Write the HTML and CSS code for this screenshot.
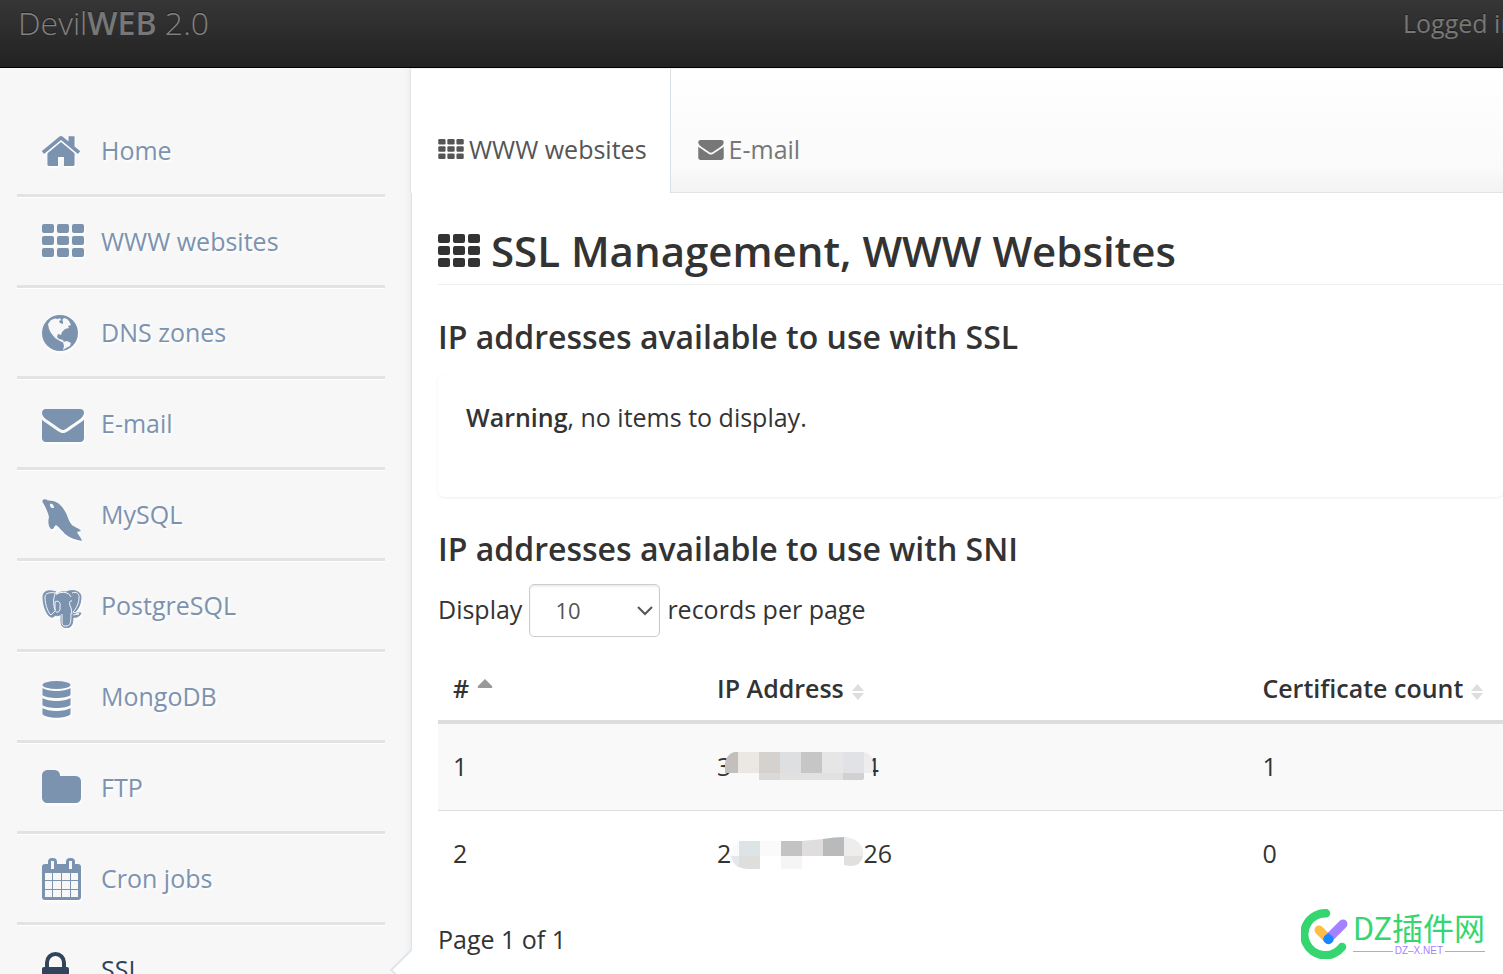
FILE: index.html
```html
<!DOCTYPE html>
<html lang="en">
<head>
<meta charset="utf-8">
<title>DevilWEB 2.0 - SSL Management</title>
<link rel="stylesheet" href="styles.css">
</head>
<body>
<svg class="sprite" aria-hidden="true">
  <symbol id="th" viewBox="0 0 42 33"><g><rect width="12" height="9" rx="2"/><rect x="15" width="12" height="9" rx="2"/><rect x="30" width="12" height="9" rx="2"/><rect y="12" width="12" height="9" rx="2"/><rect x="15" y="12" width="12" height="9" rx="2"/><rect x="30" y="12" width="12" height="9" rx="2"/><rect y="24" width="12" height="9" rx="2"/><rect x="15" y="24" width="12" height="9" rx="2"/><rect x="30" y="24" width="12" height="9" rx="2"/></g></symbol>
  <symbol id="envelope" viewBox="0 256 1792 1408"><path d="M1792 710v794q0 66-47 113t-113 47h-1472q-66 0-113-47t-47-113v-794q44 49 101 87 362 246 497 345 57 42 92.500 65.500t94.500 48 110 24.500h2q51 0 110-24.500t94.500-48 92.500-65.500q170-123 498-345 57-39 100-87zm0-294q0 79-49 151t-122 123q-376 261-468 325-10 7-42.500 31t-54 38.500-52 32.500-57.500 27-50 9h-2q-23 0-50-9t-57.500-27-52-32.500-54-38.500-42.500-31q-91-64-262-182.500t-205-142.500q-62-42-117-115.500t-55-136.500q0-78 41.500-130t118.500-52h1472q65 0 112.500 47t47.500 113z"/></symbol>
</svg>

<header class="topbar">
  <a class="brand" href="#">Devil<strong>WEB</strong> 2.0</a>
  <p class="login">Logged in</p>
</header>

<div class="layout">
  <nav class="sidebar">
    <ul class="menu">
      <li><a href="#"><svg class="icon" viewBox="0 0 44 56"><svg y="14" width="38" height="30" viewBox="89 250 1614 1286" preserveAspectRatio="none"><path d="M1472 992v480q0 26-19 45t-45 19h-384v-384h-256v384h-384q-26 0-45-19t-19-45v-480q0-1 .5-3t.5-3l575-474 575 474q1 2 1 6zm223-69l-62 74q-8 9-21 11h-3q-13 0-21-7l-692-577-692 577q-12 8-24 7-13-2-21-11l-62-74q-8-10-7-23.500t11-21.500l719-599q32-26 76-26t76 26l244 204v-195q0-14 9-23t23-9h192q14 0 23 9t9 23v408l219 182q10 8 11 21.500t-7 23.500z"/></svg></svg><span>Home</span></a></li>
      <li><a href="#"><svg class="icon" viewBox="0 0 44 56"><use href="#th" y="11" width="42" height="33"/></svg><span>WWW websites</span></a></li>
      <li><a href="#"><svg class="icon" viewBox="0 0 44 56"><circle cx="18" cy="29" r="18"/><path class="cut" d="M6 20 L9 16 L13 14.500 L16 15 L18 14 L19 16 L17 17 L18 19 L21 20 L21 17 L20 16 L22 14 L25 15 L27 17 L29 21 L26 22 L27 24 L23 25 L20 28 L19 31 L16 30 L15 33 L17 35 L21 36 L22 39 L18 37 L13 34 L9 29 L7 25 Z"/><path class="cut" d="M21 38 L25 37 L29 39 L28 42 L24 44 L21 46 L22 42 Z"/></svg><span>DNS zones</span></a></li>
      <li><a href="#"><svg class="icon" viewBox="0 0 44 56"><use href="#envelope" y="14" width="42" height="33"/></svg><span>E-mail</span></a></li>
      <li><a href="#"><svg class="icon" viewBox="0 0 44 56"><path d="M.5 16 C0 13 3 12.500 6 14.500 C14 14 20 19 24 27 C26 31 27 36 30 39 C32 41 37 42 39 45 L35 46 C36 49 39 51 40 55 C34 54 28 52 23 48 C20 45 17 41 14 39 C12 40 12 44 9 43 C6 40 6 35 7 31 C6 26 4 22 .5 16 Z"/><path class="cut" d="M8 18 C10 17 12 19 12 22 L10 22 C8 21 8 20 8 18 Z"/></svg><span>MySQL</span></a></li>
      <li><a href="#"><svg class="icon" viewBox="0 0 44 56"><g class="pg"><path d="M14 15 C8 13 1 13 1 20 C1 29 5 39 9 40 C12 41 14 37 15 36"/><path d="M24 15 C31 12 39 14 39 20 C39 28 35 34 32 36 L39 36 C38 40 33 41 30 40"/><path d="M19 37 C17 39 13 40 12 36 L14 23 C13 17 18 14 23 15 C29 15 32 20 31 25 C33 31 31 35 31 40 C31 46 30 50 26 50.500 C21 51 19 49 19 44 Z"/></g><g class="pg-line"><path d="M3 20 C3 29 7 37 9 38 L13 34 M14 15 C10 22 12 30 13 33"/><path d="M3 20 C3 16 8 15 13 16 M15 17 C20 14 27 15 29 20 M30 16 C34 14 38 17 37 21 C37 26 34 32 31 35 L37 37 L31 38"/><path d="M13 25 C16 23 19 25 18 30 C19 36 13 37 13 32 Z M30 24 C27 23 27 27 29 31 L30 37"/><path d="M20 37 V45 C20 49 22 49 25 49 C29 48 29 44 29 36"/></g></svg><span>PostgreSQL</span></a></li>
      <li><a href="#"><svg class="icon" viewBox="0 0 44 56"><ellipse cx="14.500" cy="17" rx="14" ry="4"/><path d="M.5 20 C6 24 23 24 28.500 20 V27 C25 31 4 31 .5 27 Z M.5 30 C6 34 23 34 28.500 30 V37 C25 41 4 41 .5 37 Z M.5 40 C6 44 23 44 28.500 40 V46 C25 51 4 51 .5 46 Z"/></svg><span>MongoDB</span></a></li>
      <li><a href="#"><svg class="icon" viewBox="0 0 44 56"><svg y="11" width="39" height="33" viewBox="64 128 1664 1408"><path d="M1728 608v704q0 92-66 158t-158 66h-1216q-92 0-158-66t-66-158v-960q0-92 66-158t158-66h320q92 0 158 66t66 158v32h672q92 0 158 66t66 158z"/></svg></svg><span>FTP</span></a></li>
      <li><a href="#"><svg class="icon" viewBox="0 0 44 56"><rect y="14" width="39" height="36" rx="3"/><rect x="6" y="8" width="9" height="12" rx="4"/><rect x="24" y="8" width="9" height="12" rx="4"/><path class="cut" d="M9 11h3v8h-3z M27 11h3v8h-3z M3 23h7v7h-7z M11 23h8v7h-8z M20 23h8v7h-8z M29 23h7v7h-7z M3 31h7v8h-7z M11 31h8v8h-8z M20 31h8v8h-8z M29 31h7v8h-7z M3 40h7v7h-7z M11 40h8v7h-8z M20 40h8v7h-8z M29 40h7v7h-7z"/></svg><span>Cron jobs</span></a></li>
      <li class="active"><a href="#"><svg class="icon" viewBox="0 0 44 56"><rect y="26" width="27" height="19" rx="2"/><path class="shackle" d="M5 28 V21.500 A8.500 8.500 0 0 1 22 21.500 V28"/></svg><span>SSL</span></a></li>
    </ul>
  </nav>

  <main class="main">
    <nav class="tabs">
      <a class="tab tab-active" href="#"><svg class="tab-icon"><use href="#th" width="26" height="20"/></svg>WWW websites</a>
      <a class="tab" href="#"><svg class="tab-icon tab-mail"><use href="#envelope" width="26" height="20"/></svg>E-mail</a>
    </nav>
    <div class="content">
      <h1><svg class="title-icon" viewBox="0 0 42 33"><use href="#th" width="42" height="33"/></svg>SSL Management, WWW Websites</h1>
      <h2>IP addresses available to use with SSL</h2>
      <p class="notice"><strong>Warning</strong>, no items to display.</p>
      <h2>IP addresses available to use with SNI</h2>
      <div class="length">
        <label for="count">Display</label>
        <span class="picker"><select id="count"><option>10</option><option>25</option></select><svg class="chevron" viewBox="0 0 16 10"><path d="M1 1 L8 8 L15 1"/></svg></span>
        <label for="count">records per page</label>
      </div>
      <table class="grid">
        <thead>
          <tr>
            <th class="col-id">#<svg class="sort-up" viewBox="0 0 16 9"><path d="M8 0 L15 7 Q16 9 14 9 H2 Q0 9 1 7 Z"/></svg></th>
            <th class="col-ip">IP Address<svg class="sort" viewBox="0 0 12 16"><path d="M6 0 L12 7 H0 Z M0 9 H12 L6 16 Z"/></svg></th>
            <th>Certificate count<svg class="sort" viewBox="0 0 12 16"><path d="M6 0 L12 7 H0 Z M0 9 H12 L6 16 Z"/></svg></th>
          </tr>
        </thead>
        <tbody>
          <tr>
            <td>1</td>
            <td><span class="address">3<svg class="mask mask-one" viewBox="0 0 148 28"><path fill="#c3bfbc" d="M13 0v21H0V11Q2 2 9 0z"/><path fill="#ebe7e2" d="M13 0h21v21H13z"/><path fill="#d5d1ce" d="M34 0h21v21H34z"/><path fill="#dedfe0" d="M55 0h21v21H55z"/><path fill="#c6c6c6" d="M76 0h21v21H76z"/><path fill="#e6e6e6" d="M97 0h21v21H97z"/><path fill="#e0e2e5" d="M118 0h21v21h-21z"/><path fill="#ededed" d="M139 0q8 2 9 10v11h-9z"/><path fill="#d9d9d9" d="M34 21h21v7H34z"/><path fill="#e1e1df" d="M55 21h63v7H55z"/><path fill="#d1d1d1" d="M118 21h21v5q0 2-2 2h-19z"/></svg>4</span></td>
            <td>1</td>
          </tr>
          <tr>
            <td>2</td>
            <td><span class="address">2<svg class="mask mask-two" viewBox="0 0 132 32"><path fill="#fafafa" d="M8 4v15H0Q0 8 8 4z"/><path fill="#dee3e6" d="M8 4h21v15H8z"/><path fill="#fafafa" d="M29 4h21v15H29z"/><path fill="#c3c3c3" d="M50 4h21v15H50z"/><path fill="#dfdddd" d="M71 4L92 2v17H71z"/><path fill="#b9babc" d="M92 2Q103 0 113 0v19H92z"/><path fill="#ededed" d="M113 0q15 1 19 13v6h-19z"/><path fill="#e5e8ea" d="M0 19h8v12Q1 26 0 19z"/><path fill="#dededd" d="M8 19h21v13H18Q12 32 8 30z"/><path fill="#f5f5f5" d="M50 19h21v13H50z"/><path fill="#e1e0de" d="M113 19h19q-2 10-13 10l-6-1z"/></svg>26</span></td>
            <td>0</td>
          </tr>
        </tbody>
      </table>
      <p class="pages">Page 1 of 1</p>
    </div>
  </main>
</div>

<aside class="watermark">
  <svg class="wm-logo" viewBox="0 0 48 50"><path d="M25 4.300 A21 21 0 1 0 41 38" fill="none" stroke="#35d66f" stroke-width="8.500" stroke-linecap="round"/><path d="M18 21 L27 30" stroke="#ffbd42" stroke-width="9" stroke-linecap="round"/><path d="M42 15 L27 30" stroke="#a482ff" stroke-width="9" stroke-linecap="round"/><path d="M23.500 27 L27.500 24 L32 28 A5 5 0 1 1 23.500 27 Z" fill="#1787ff"/></svg>
  <div class="wm-words">
    <span class="wm-name">DZ插件网</span>
    <span class="wm-site">DZ–X.NET</span>
  </div>
</aside>
</body>
</html>
```
FILE: styles.css
```css
* { box-sizing: border-box; }
html, body { height: 100%; }
body {
  position: relative;
  display: flex;
  flex-direction: column;
  margin: 0;
  overflow: hidden;
  background: #fff;
  color: #333;
  font: 400 25px/36px "Open Sans", sans-serif;
}
a { color: inherit; text-decoration: none; }
h1, h2, p, ul { margin: 0; padding: 0; }
strong, th { font-weight: 600; }
svg { fill: currentColor; }
.sprite { position: absolute; width: 0; height: 0; }

.topbar {
  display: flex;
  flex: none;
  justify-content: space-between;
  height: 68px;
  overflow: hidden;
  padding-left: 18px;
  border-bottom: 1px solid #000;
  background: linear-gradient(#363636, #222);
  color: #777;
  text-shadow: 0 -1px 0 rgba(0, 0, 0, .4);
  white-space: nowrap;
}
.brand { color: #808080; font-size: 32px; line-height: 46px; font-weight: 300; }
.brand strong { color: #777; }
.login { width: 100px; line-height: 46px; }

.layout { display: flex; flex: 1; min-height: 0; }
.sidebar {
  flex: none;
  width: 412px;
  padding: 38px 26px 0 17px;
  border-right: 1px solid #d9e2e9;
  background: #f7f7f7;
  box-shadow: inset -8px 0 8px -6px rgba(0, 0, 0, .05);
}
.menu { list-style: none; }
.menu li {
  position: relative;
  border-bottom: 3px solid #e3e3e3;
  box-shadow: 0 1px 0 #fff;
  color: #7c93b0;
  text-shadow: 2px 2px 2px #fff;
}
.menu a { display: flex; align-items: center; height: 88px; padding-left: 25px; gap: 15px; }
.menu .active { color: #30445c; }
.menu .active::after {
  content: "";
  position: absolute;
  top: 30px;
  right: -41px;
  width: 28px;
  height: 28px;
  border: solid #dce6ec;
  border-width: 0 0 2px 2px;
  background: #fff;
  transform: rotate(45deg);
}
.icon { width: 44px; height: 56px; filter: drop-shadow(1px 2px 1px #fff); }
.cut { fill: #f7f7f7; }
.pg { stroke: currentColor; stroke-width: 1; }
.pg-line { fill: none; stroke: #f7f7f7; stroke-width: 1; }
.shackle { fill: none; stroke: currentColor; stroke-width: 4; }

.main { flex: 1; min-width: 0; }
.tabs {
  position: relative;
  display: flex;
  height: 125px;
  margin-left: -2px;
  border-top: 1px solid #eee;
  border-bottom: 1px solid #e3e3e3;
  border-left: 1px solid #e3e3e3;
  background: linear-gradient(#fff, #fafafa 80%, #f3f3f3);
  color: #777;
}
.tab { display: flex; align-items: center; padding: 36px 27px 0; white-space: nowrap; }
.tab-active { margin-bottom: -1px; border-right: 1px solid #d9e0e6; background: #fff; color: #555; padding-right: 23px; }
.tab-icon { width: 26px; height: 20px; margin-right: 5px; }
.tab-mail { margin-top: 2px; }

.content { padding-left: 26px; }
h1 { display: flex; align-items: center; gap: 11px; padding: 28px 0 3px; border-bottom: 1px solid #eee; font-size: 42px; line-height: 60px; font-weight: 600; white-space: nowrap; }
.title-icon { width: 42px; height: 33px; margin-bottom: 2px; }
h2 { padding: 31px 0 17px; font-size: 32px; line-height: 42px; font-weight: 600; }
.notice { height: 122px; padding: 24px 28px; border-radius: 6px; box-shadow: 0 1px 3px rgba(0, 0, 0, .07); }
.length { display: flex; align-items: center; gap: 7px; margin-top: -3px; }
.length label { padding-bottom: 3px; }
.picker { position: relative; }
select {
  display: block;
  width: 131px;
  height: 53px;
  padding: 0 25px 2px;
  appearance: none;
  border: 1px solid #ccc;
  border-radius: 5px;
  background: #fff;
  box-shadow: inset 0 2px 2px rgba(0, 0, 0, .07);
  color: #555;
  font: 400 22px/30px "Open Sans", sans-serif;
}
.chevron { position: absolute; top: 22px; right: 7px; width: 16px; height: 10px; fill: none; stroke: #555; stroke-width: 2; pointer-events: none; }

.grid { width: 100%; margin-top: 20px; border-collapse: collapse; table-layout: fixed; }
th, td { padding: 24px 15px 26px; text-align: left; white-space: nowrap; }
th { padding: 13px 15px 14px; border-bottom: 4px solid #ddd; }
.col-id { width: 24.8%; }
.col-ip { width: 51.2%; }
tbody tr:first-child { border-bottom: 1px solid #ddd; background: #f9f9f9; }
.sort-up { width: 16px; height: 9px; margin: 0 0 10px 8px; fill: #999; }
.sort { width: 12px; height: 16px; margin: 0 0 -2px 8px; fill: #ddd; }
.address { display: flex; align-items: center; }
.mask { position: relative; flex: none; }
.mask-one { width: 148px; height: 28px; margin: 0 -9px 0 -6px; }
.mask-two { width: 132px; height: 32px; }
.pages { margin-top: 24px; }

.watermark { position: absolute; right: 18px; bottom: 15px; display: flex; gap: 4px; color: #35d66f; }
.wm-logo { width: 48px; height: 50px; }
.wm-words { display: flex; flex-direction: column; }
.wm-name { font: 400 31px/36px "Noto Sans CJK SC", sans-serif; white-space: nowrap; }
.wm-site { display: flex; align-items: center; gap: 2px; color: #a482ff; font: 400 10px/12px "Liberation Sans", sans-serif; }
.wm-site::before, .wm-site::after { content: ""; flex: 1; height: 1px; background: #b79dff; }
```
